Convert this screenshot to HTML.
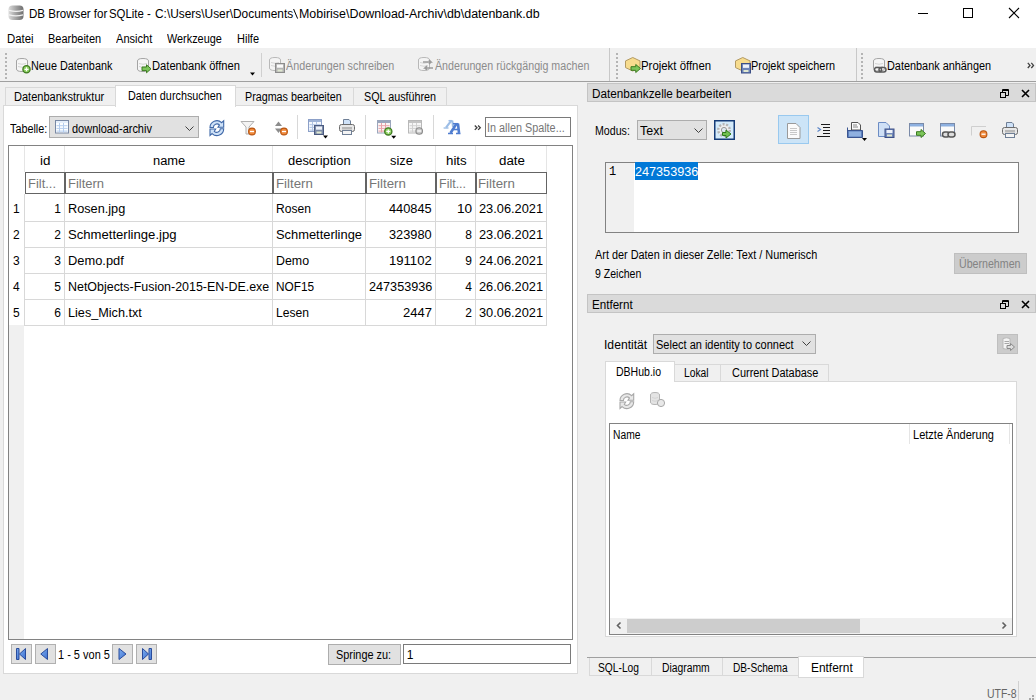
<!DOCTYPE html>
<html><head><meta charset="utf-8"><style>
html,body{margin:0;padding:0;}
body{width:1036px;height:700px;position:relative;overflow:hidden;background:#f0f0f0;font-family:"Liberation Sans", sans-serif;}
body>div{position:absolute;}
.t{white-space:pre;}
svg{position:absolute;overflow:visible;}
</style></head><body>
<div style="left:0px;top:0px;width:1036px;height:48px;background:#ffffff;"></div>
<div class="t" style="left:28.90px;top:8px;font-size:12px;line-height:12px;color:#000;transform:scaleX(0.9631);transform-origin:0 0;">DB Browser for</div>
<div class="t" style="left:109.40px;top:8px;font-size:12px;line-height:12px;color:#000;transform:scaleX(0.9483);transform-origin:0 0;">SQLite -</div>
<div class="t" style="left:155.40px;top:8px;font-size:12px;line-height:12px;color:#000;transform:scaleX(0.9915);transform-origin:0 0;">C:\Users\User\Documents</div>
<svg style="left:292px;top:8px" width="8" height="12" viewBox="0 0 8 12"><path d="M1.6 1 L5.6 10.6" stroke="#000" stroke-width="1"/></svg>
<div class="t" style="left:298.60px;top:8px;font-size:12px;line-height:12px;color:#000;transform:scaleX(1.0366);transform-origin:0 0;">Mobirise\Download-Archiv\db\datenbank.db</div>
<div class="t" style="left:6.80px;top:33px;font-size:12px;line-height:12px;color:#000;transform:scaleX(0.9472);transform-origin:0 0;">Datei</div>
<div class="t" style="left:47.70px;top:33px;font-size:12px;line-height:12px;color:#000;transform:scaleX(0.9147);transform-origin:0 0;">Bearbeiten</div>
<div class="t" style="left:115.90px;top:33px;font-size:12px;line-height:12px;color:#000;transform:scaleX(0.9224);transform-origin:0 0;">Ansicht</div>
<div class="t" style="left:167.00px;top:33px;font-size:12px;line-height:12px;color:#000;transform:scaleX(0.9058);transform-origin:0 0;">Werkzeuge</div>
<div class="t" style="left:236.90px;top:33px;font-size:12px;line-height:12px;color:#000;transform:scaleX(0.9160);transform-origin:0 0;">Hilfe</div>
<div style="left:0px;top:48px;width:1036px;height:33px;background:#f0f0f0;"></div>
<div style="left:0px;top:81px;width:1036px;height:1px;background:#a0a0a0;"></div>
<div class="t" style="left:30.80px;top:60px;font-size:12px;line-height:12px;color:#000;transform:scaleX(0.9035);transform-origin:0 0;">Neue Datenbank</div>
<div class="t" style="left:151.90px;top:60px;font-size:12px;line-height:12px;color:#000;transform:scaleX(0.9311);transform-origin:0 0;">Datenbank öffnen</div>
<div class="t" style="left:286.20px;top:60px;font-size:12px;line-height:12px;color:#8c8c8c;transform:scaleX(0.8966);transform-origin:0 0;">Änderungen schreiben</div>
<div class="t" style="left:435.10px;top:60px;font-size:12px;line-height:12px;color:#8c8c8c;transform:scaleX(0.8899);transform-origin:0 0;">Änderungen rückgängig machen</div>
<div style="left:261px;top:53px;width:1px;height:24px;background:#d0d0d0;"></div>
<div style="left:609px;top:48px;width:1px;height:33px;background:#c8c8c8;"></div>
<div class="t" style="left:641.40px;top:60px;font-size:12px;line-height:12px;color:#000;transform:scaleX(0.9500);transform-origin:0 0;">Projekt öffnen</div>
<div class="t" style="left:751.40px;top:60px;font-size:12px;line-height:12px;color:#000;transform:scaleX(0.9069);transform-origin:0 0;">Projekt speichern</div>
<div style="left:856px;top:48px;width:1px;height:33px;background:#c8c8c8;"></div>
<div class="t" style="left:887.40px;top:60px;font-size:12px;line-height:12px;color:#000;transform:scaleX(0.9068);transform-origin:0 0;">Datenbank anhängen</div>
<div style="left:3px;top:105px;width:575px;height:569px;background:#ffffff;box-sizing:border-box;border:1px solid #d9d9d9;"></div>
<div style="left:5px;top:87px;width:111px;height:19px;background:#f0f0f0;box-sizing:border-box;border:1px solid #d9d9d9;"></div>
<div style="left:235px;top:87px;width:119px;height:19px;background:#f0f0f0;box-sizing:border-box;border:1px solid #d9d9d9;"></div>
<div style="left:353px;top:87px;width:94px;height:19px;background:#f0f0f0;box-sizing:border-box;border:1px solid #d9d9d9;"></div>
<div style="left:115px;top:85px;width:121px;height:22px;background:#ffffff;box-sizing:border-box;border:1px solid #d9d9d9;border-bottom:none;"></div>
<div class="t" style="left:14.10px;top:91px;font-size:12px;line-height:12px;color:#000;transform:scaleX(0.9199);transform-origin:0 0;">Datenbankstruktur</div>
<div class="t" style="left:127.70px;top:90px;font-size:12px;line-height:12px;color:#000;transform:scaleX(0.9011);transform-origin:0 0;">Daten durchsuchen</div>
<div class="t" style="left:244.60px;top:91px;font-size:12px;line-height:12px;color:#000;transform:scaleX(0.8945);transform-origin:0 0;">Pragmas bearbeiten</div>
<div class="t" style="left:364.40px;top:91px;font-size:12px;line-height:12px;color:#000;transform:scaleX(0.8978);transform-origin:0 0;">SQL ausführen</div>
<div class="t" style="left:9.50px;top:123px;font-size:12px;line-height:12px;color:#000;transform:scaleX(0.9011);transform-origin:0 0;">Tabelle:</div>
<div style="left:49px;top:116px;width:150px;height:22px;background:#e1e1e1;box-sizing:border-box;border:1px solid #adadad;"></div>
<div class="t" style="left:71.80px;top:123px;font-size:12px;line-height:12px;color:#000;transform:scaleX(0.9143);transform-origin:0 0;">download-archiv</div>
<div style="left:485px;top:117px;width:86px;height:20px;background:#ffffff;box-sizing:border-box;border:1px solid #7a7a7a;"></div>
<div class="t" style="left:487.10px;top:122px;font-size:12px;line-height:12px;color:#767676;transform:scaleX(0.9026);transform-origin:0 0;">In allen Spalte...</div>
<div style="left:297px;top:115px;width:1px;height:24px;background:#d8d8d8;"></div>
<div style="left:365px;top:115px;width:1px;height:24px;background:#d8d8d8;"></div>
<div style="left:433px;top:115px;width:1px;height:24px;background:#d8d8d8;"></div>
<div style="left:8px;top:145px;width:565px;height:495px;background:#ffffff;box-sizing:border-box;border:1px solid #828282;"></div>
<div style="left:9px;top:325px;width:15px;height:314px;background:#f0f0f0;"></div>
<div style="left:24px;top:146px;width:1px;height:26px;background:#e5e5e5;"></div>
<div style="left:24px;top:194px;width:1px;height:131px;background:#d8d8d8;"></div>
<div style="left:64px;top:146px;width:1px;height:26px;background:#e5e5e5;"></div>
<div style="left:64px;top:194px;width:1px;height:131px;background:#d8d8d8;"></div>
<div style="left:272px;top:146px;width:1px;height:26px;background:#e5e5e5;"></div>
<div style="left:272px;top:194px;width:1px;height:131px;background:#d8d8d8;"></div>
<div style="left:365px;top:146px;width:1px;height:26px;background:#e5e5e5;"></div>
<div style="left:365px;top:194px;width:1px;height:131px;background:#d8d8d8;"></div>
<div style="left:435px;top:146px;width:1px;height:26px;background:#e5e5e5;"></div>
<div style="left:435px;top:194px;width:1px;height:131px;background:#d8d8d8;"></div>
<div style="left:475px;top:146px;width:1px;height:26px;background:#e5e5e5;"></div>
<div style="left:475px;top:194px;width:1px;height:131px;background:#d8d8d8;"></div>
<div style="left:546px;top:146px;width:1px;height:26px;background:#e5e5e5;"></div>
<div style="left:546px;top:194px;width:1px;height:131px;background:#d8d8d8;"></div>
<div style="left:24px;top:221px;width:523px;height:1px;background:#d8d8d8;"></div>
<div style="left:24px;top:247px;width:523px;height:1px;background:#d8d8d8;"></div>
<div style="left:24px;top:273px;width:523px;height:1px;background:#d8d8d8;"></div>
<div style="left:24px;top:299px;width:523px;height:1px;background:#d8d8d8;"></div>
<div style="left:24px;top:325px;width:523px;height:1px;background:#d8d8d8;"></div>
<div style="left:25px;top:172px;width:40px;height:22px;background:#ffffff;box-sizing:border-box;border:1px solid #646464;"></div>
<div style="left:65px;top:172px;width:208px;height:22px;background:#ffffff;box-sizing:border-box;border:1px solid #646464;"></div>
<div style="left:273px;top:172px;width:93px;height:22px;background:#ffffff;box-sizing:border-box;border:1px solid #646464;"></div>
<div style="left:366px;top:172px;width:70px;height:22px;background:#ffffff;box-sizing:border-box;border:1px solid #646464;"></div>
<div style="left:436px;top:172px;width:40px;height:22px;background:#ffffff;box-sizing:border-box;border:1px solid #646464;"></div>
<div style="left:476px;top:172px;width:71px;height:22px;background:#ffffff;box-sizing:border-box;border:1px solid #646464;"></div>
<div class="t" style="left:40.00px;top:155px;font-size:12px;line-height:12px;color:#000;transform:scaleX(1.1174);transform-origin:0 0;">id</div>
<div class="t" style="left:152.90px;top:155px;font-size:12px;line-height:12px;color:#000;transform:scaleX(1.0752);transform-origin:0 0;">name</div>
<div class="t" style="left:287.80px;top:155px;font-size:12px;line-height:12px;color:#000;transform:scaleX(1.0786);transform-origin:0 0;">description</div>
<div class="t" style="left:389.50px;top:155px;font-size:12px;line-height:12px;color:#000;transform:scaleX(1.0723);transform-origin:0 0;">size</div>
<div class="t" style="left:446.10px;top:155px;font-size:12px;line-height:12px;color:#000;transform:scaleX(1.1094);transform-origin:0 0;">hits</div>
<div class="t" style="left:498.70px;top:155px;font-size:12px;line-height:12px;color:#000;transform:scaleX(1.1101);transform-origin:0 0;">date</div>
<div class="t" style="left:28.00px;top:178px;font-size:12px;line-height:12px;color:#767676;transform:scaleX(1.0766);transform-origin:0 0;">Filt...</div>
<div class="t" style="left:67.80px;top:178px;font-size:12px;line-height:12px;color:#767676;transform:scaleX(1.0826);transform-origin:0 0;">Filtern</div>
<div class="t" style="left:275.80px;top:178px;font-size:12px;line-height:12px;color:#767676;transform:scaleX(1.1075);transform-origin:0 0;">Filtern</div>
<div class="t" style="left:368.60px;top:178px;font-size:12px;line-height:12px;color:#767676;transform:scaleX(1.1075);transform-origin:0 0;">Filtern</div>
<div class="t" style="left:438.60px;top:178px;font-size:12px;line-height:12px;color:#767676;transform:scaleX(1.0403);transform-origin:0 0;">Filt...</div>
<div class="t" style="left:478.40px;top:178px;font-size:12px;line-height:12px;color:#767676;transform:scaleX(1.1075);transform-origin:0 0;">Filtern</div>
<div class="t" style="left:12.90px;top:203px;font-size:12px;line-height:12px;color:#000;">1</div>
<div class="t" style="right:975px;top:203px;font-size:12px;line-height:12px">1</div>
<div class="t" style="left:67.80px;top:203px;font-size:12px;line-height:12px;color:#000;transform:scaleX(1.0597);transform-origin:0 0;">Rosen.jpg</div>
<div class="t" style="left:276.00px;top:203px;font-size:12px;line-height:12px;color:#000;transform:scaleX(1.0063);transform-origin:0 0;">Rosen</div>
<div class="t" style="left:389.40px;top:203px;font-size:12px;line-height:12px;color:#000;transform:scaleX(1.0657);transform-origin:0 0;">440845</div>
<div class="t" style="left:456.80px;top:203px;font-size:12px;line-height:12px;color:#000;transform:scaleX(1.1349);transform-origin:0 0;">10</div>
<div class="t" style="left:478.60px;top:203px;font-size:12px;line-height:12px;color:#000;transform:scaleX(1.0669);transform-origin:0 0;">23.06.2021</div>
<div class="t" style="left:12.90px;top:229px;font-size:12px;line-height:12px;color:#000;">2</div>
<div class="t" style="right:975px;top:229px;font-size:12px;line-height:12px">2</div>
<div class="t" style="left:67.80px;top:229px;font-size:12px;line-height:12px;color:#000;transform:scaleX(1.0918);transform-origin:0 0;">Schmetterlinge.jpg</div>
<div class="t" style="left:276.00px;top:229px;font-size:12px;line-height:12px;color:#000;transform:scaleX(1.0742);transform-origin:0 0;">Schmetterlinge</div>
<div class="t" style="left:389.40px;top:229px;font-size:12px;line-height:12px;color:#000;transform:scaleX(1.0657);transform-origin:0 0;">323980</div>
<div class="t" style="right:564px;top:229px;font-size:12px;line-height:12px">8</div>
<div class="t" style="left:478.60px;top:229px;font-size:12px;line-height:12px;color:#000;transform:scaleX(1.0669);transform-origin:0 0;">23.06.2021</div>
<div class="t" style="left:12.90px;top:255px;font-size:12px;line-height:12px;color:#000;">3</div>
<div class="t" style="right:975px;top:255px;font-size:12px;line-height:12px">3</div>
<div class="t" style="left:67.80px;top:255px;font-size:12px;line-height:12px;color:#000;transform:scaleX(1.0722);transform-origin:0 0;">Demo.pdf</div>
<div class="t" style="left:276.00px;top:255px;font-size:12px;line-height:12px;color:#000;transform:scaleX(1.0319);transform-origin:0 0;">Demo</div>
<div class="t" style="left:389.40px;top:255px;font-size:12px;line-height:12px;color:#000;transform:scaleX(1.0907);transform-origin:0 0;">191102</div>
<div class="t" style="right:564px;top:255px;font-size:12px;line-height:12px">9</div>
<div class="t" style="left:478.60px;top:255px;font-size:12px;line-height:12px;color:#000;transform:scaleX(1.0669);transform-origin:0 0;">24.06.2021</div>
<div class="t" style="left:12.90px;top:281px;font-size:12px;line-height:12px;color:#000;">4</div>
<div class="t" style="right:975px;top:281px;font-size:12px;line-height:12px">5</div>
<div class="t" style="left:67.80px;top:281px;font-size:12px;line-height:12px;color:#000;transform:scaleX(1.0369);transform-origin:0 0;">NetObjects-Fusion-2015-EN-DE.exe</div>
<div class="t" style="left:276.00px;top:281px;font-size:12px;line-height:12px;color:#000;transform:scaleX(0.9843);transform-origin:0 0;">NOF15</div>
<div class="t" style="left:368.70px;top:281px;font-size:12px;line-height:12px;color:#000;transform:scaleX(1.0547);transform-origin:0 0;">247353936</div>
<div class="t" style="right:564px;top:281px;font-size:12px;line-height:12px">4</div>
<div class="t" style="left:478.60px;top:281px;font-size:12px;line-height:12px;color:#000;transform:scaleX(1.0669);transform-origin:0 0;">26.06.2021</div>
<div class="t" style="left:12.90px;top:307px;font-size:12px;line-height:12px;color:#000;">5</div>
<div class="t" style="right:975px;top:307px;font-size:12px;line-height:12px">6</div>
<div class="t" style="left:67.80px;top:307px;font-size:12px;line-height:12px;color:#000;transform:scaleX(1.0548);transform-origin:0 0;">Lies_Mich.txt</div>
<div class="t" style="left:276.00px;top:307px;font-size:12px;line-height:12px;color:#000;transform:scaleX(1.0094);transform-origin:0 0;">Lesen</div>
<div class="t" style="left:403.20px;top:307px;font-size:12px;line-height:12px;color:#000;transform:scaleX(1.0822);transform-origin:0 0;">2447</div>
<div class="t" style="right:564px;top:307px;font-size:12px;line-height:12px">2</div>
<div class="t" style="left:478.60px;top:307px;font-size:12px;line-height:12px;color:#000;transform:scaleX(1.0669);transform-origin:0 0;">30.06.2021</div>
<div style="left:11px;top:644px;width:21px;height:20px;background:#e1e1e1;box-sizing:border-box;border:1px solid #b0b0b0;"></div>
<div style="left:35px;top:644px;width:21px;height:20px;background:#e1e1e1;box-sizing:border-box;border:1px solid #b0b0b0;"></div>
<div style="left:112px;top:644px;width:21px;height:20px;background:#e1e1e1;box-sizing:border-box;border:1px solid #b0b0b0;"></div>
<div style="left:136px;top:644px;width:21px;height:20px;background:#e1e1e1;box-sizing:border-box;border:1px solid #b0b0b0;"></div>
<div class="t" style="left:58.10px;top:649px;font-size:12px;line-height:12px;color:#000;transform:scaleX(0.9153);transform-origin:0 0;">1 - 5 von 5</div>
<div style="left:328px;top:644px;width:73px;height:21px;background:#e1e1e1;box-sizing:border-box;border:1px solid #adadad;"></div>
<div class="t" style="left:335.80px;top:649px;font-size:12px;line-height:12px;color:#000;transform:scaleX(0.9075);transform-origin:0 0;">Springe zu:</div>
<div style="left:403px;top:644px;width:168px;height:20px;background:#ffffff;box-sizing:border-box;border:1px solid #7a7a7a;"></div>
<div class="t" style="left:406.70px;top:649px;font-size:12px;line-height:12px;color:#000;">1</div>
<div style="left:587px;top:83px;width:449px;height:19px;background:#dadada;box-sizing:border-box;border:1px solid #c4c4c4;"></div>
<div class="t" style="left:591.80px;top:88px;font-size:12px;line-height:12px;color:#000;transform:scaleX(0.9775);transform-origin:0 0;">Datenbankzelle bearbeiten</div>
<div class="t" style="left:595.10px;top:125px;font-size:12px;line-height:12px;color:#000;transform:scaleX(0.8858);transform-origin:0 0;">Modus:</div>
<div style="left:637px;top:120px;width:70px;height:20px;background:#e1e1e1;box-sizing:border-box;border:1px solid #adadad;"></div>
<div class="t" style="left:640.10px;top:125px;font-size:12px;line-height:12px;color:#000;transform:scaleX(1.0377);transform-origin:0 0;">Text</div>
<div style="left:714px;top:120px;width:21px;height:20px;background:#d4ebfb;box-sizing:border-box;border:1px solid #153c78;box-shadow:inset 0 0 0 0.5px #153c78;"></div>
<div style="left:778px;top:115px;width:31px;height:29px;background:#cce4f7;box-sizing:border-box;border:1px solid #99c9ef;"></div>
<div style="left:605px;top:162px;width:414px;height:71px;background:#ffffff;box-sizing:border-box;border:1px solid #828282;"></div>
<div style="left:606px;top:163px;width:28px;height:69px;background:#f0f0f0;"></div>
<div class="t" style="left:609.00px;top:166px;font-size:12px;line-height:12px;color:#000;font-family:'Liberation Mono', monospace;">1</div>
<div style="left:635px;top:162px;width:63px;height:18px;background:#0078d7;"></div>
<div class="t" style="left:634.90px;top:166px;font-size:12px;line-height:12px;color:#ffffff;transform:scaleX(1.0530);transform-origin:0 0;">247353936</div>
<div class="t" style="left:595.20px;top:249px;font-size:12px;line-height:12px;color:#000;transform:scaleX(0.9065);transform-origin:0 0;">Art der Daten in dieser Zelle: Text / Numerisch</div>
<div class="t" style="left:595.20px;top:268px;font-size:12px;line-height:12px;color:#000;transform:scaleX(0.8776);transform-origin:0 0;">9 Zeichen</div>
<div style="left:954px;top:253px;width:73px;height:21px;background:#cccccc;box-sizing:border-box;border:1px solid #bfbfbf;"></div>
<div class="t" style="left:959.10px;top:258px;font-size:12px;line-height:12px;color:#838383;transform:scaleX(0.8860);transform-origin:0 0;">Übernehmen</div>
<div style="left:587px;top:294px;width:449px;height:19px;background:#dadada;box-sizing:border-box;border:1px solid #c4c4c4;"></div>
<div class="t" style="left:591.90px;top:299px;font-size:12px;line-height:12px;color:#000;transform:scaleX(0.9674);transform-origin:0 0;">Entfernt</div>
<div class="t" style="left:603.90px;top:339px;font-size:12px;line-height:12px;color:#000;transform:scaleX(1.0120);transform-origin:0 0;">Identität</div>
<div style="left:653px;top:334px;width:163px;height:20px;background:#e1e1e1;box-sizing:border-box;border:1px solid #adadad;"></div>
<div class="t" style="left:655.90px;top:339px;font-size:12px;line-height:12px;color:#000;transform:scaleX(0.9168);transform-origin:0 0;">Select an identity to connect</div>
<div style="left:997px;top:334px;width:21px;height:20px;background:#cccccc;box-sizing:border-box;border:1px solid #bfbfbf;"></div>
<div style="left:605px;top:381px;width:412px;height:256px;background:#ffffff;box-sizing:border-box;border:1px solid #d9d9d9;"></div>
<div style="left:674px;top:364px;width:47px;height:18px;background:#f0f0f0;box-sizing:border-box;border:1px solid #d9d9d9;"></div>
<div style="left:720px;top:364px;width:109px;height:18px;background:#f0f0f0;box-sizing:border-box;border:1px solid #d9d9d9;"></div>
<div style="left:605px;top:361px;width:70px;height:21px;background:#ffffff;box-sizing:border-box;border:1px solid #d9d9d9;border-bottom:none;"></div>
<div class="t" style="left:615.70px;top:366px;font-size:12px;line-height:12px;color:#000;transform:scaleX(0.8772);transform-origin:0 0;">DBHub.io</div>
<div class="t" style="left:683.80px;top:367px;font-size:12px;line-height:12px;color:#000;transform:scaleX(0.8586);transform-origin:0 0;">Lokal</div>
<div class="t" style="left:731.90px;top:367px;font-size:12px;line-height:12px;color:#000;transform:scaleX(0.9121);transform-origin:0 0;">Current Database</div>
<div style="left:609px;top:423px;width:404px;height:212px;background:#ffffff;box-sizing:border-box;border:1px solid #828282;"></div>
<div class="t" style="left:613.00px;top:429px;font-size:12px;line-height:12px;color:#000;transform:scaleX(0.8567);transform-origin:0 0;">Name</div>
<div style="left:909px;top:424px;width:1px;height:20px;background:#e5e5e5;"></div>
<div style="left:1009px;top:424px;width:1px;height:20px;background:#e5e5e5;"></div>
<div class="t" style="left:912.80px;top:429px;font-size:12px;line-height:12px;color:#000;transform:scaleX(0.9185);transform-origin:0 0;">Letzte Änderung</div>
<div style="left:610px;top:618px;width:402px;height:16px;background:#f0f0f0;"></div>
<div style="left:627px;top:619px;width:233px;height:14px;background:#cdcdcd;"></div>
<div style="left:589px;top:657px;width:63px;height:19px;background:#f0f0f0;box-sizing:border-box;border:1px solid #d9d9d9;"></div>
<div style="left:651px;top:657px;width:72px;height:19px;background:#f0f0f0;box-sizing:border-box;border:1px solid #d9d9d9;"></div>
<div style="left:722px;top:657px;width:77px;height:19px;background:#f0f0f0;box-sizing:border-box;border:1px solid #d9d9d9;"></div>
<div style="left:587px;top:657px;width:449px;height:1px;background:#a0a0a0;"></div>
<div style="left:798px;top:656px;width:66px;height:22px;background:#ffffff;box-sizing:border-box;border:1px solid #d9d9d9;"></div>
<div class="t" style="left:597.70px;top:662px;font-size:12px;line-height:12px;color:#000;transform:scaleX(0.8541);transform-origin:0 0;">SQL-Log</div>
<div class="t" style="left:662.00px;top:662px;font-size:12px;line-height:12px;color:#000;transform:scaleX(0.8625);transform-origin:0 0;">Diagramm</div>
<div class="t" style="left:732.80px;top:662px;font-size:12px;line-height:12px;color:#000;transform:scaleX(0.8427);transform-origin:0 0;">DB-Schema</div>
<div class="t" style="left:810.60px;top:662px;font-size:12px;line-height:12px;color:#000;transform:scaleX(0.9919);transform-origin:0 0;">Entfernt</div>
<div style="left:1018px;top:681px;width:1px;height:19px;background:#d0d0d0;"></div>
<div class="t" style="left:987.10px;top:687.5px;font-size:12px;line-height:12px;color:#666666;transform:scaleX(0.8720);transform-origin:0 0;">UTF-8</div>
<div style="left:1032px;top:695px;width:2px;height:2px;background:#a8a8a8;"></div>
<div style="left:1029px;top:698px;width:2px;height:2px;background:#a8a8a8;"></div>
<div style="left:1032px;top:698px;width:2px;height:2px;background:#a8a8a8;"></div>
<svg style="left:8px;top:5px" width="16" height="16" viewBox="0 0 16 16"><defs><linearGradient id="gdb" x1="0" x2="1"><stop offset="0" stop-color="#dcdcdc"/><stop offset=".45" stop-color="#a8a8a8"/><stop offset="1" stop-color="#6e6e6e"/></linearGradient></defs><rect x="0.5" y="0.5" width="15" height="14.5" rx="4" fill="url(#gdb)"/><path d="M1 5.3 Q8 7.3 15 5.3 M1 9.8 Q8 11.8 15 9.8" stroke="#f2f2f2" stroke-width="1.2" fill="none"/></svg>
<svg style="left:16px;top:58px" width="16" height="16" viewBox="0 0 16 16"><path d="M0.5 3 Q0.5 0.5 6.0 0.5 Q11.5 0.5 11.5 3 V11 Q11.5 13.5 6.0 13.5 Q0.5 13.5 0.5 11Z" fill="#f6f6f6" stroke="#a4a4a4"/><path d="M2 5.5 Q6.0 7 10 5.5 M2 8.5 Q6.0 10 10 8.5" fill="none" stroke="#d4d4d4"/><circle cx="10.5" cy="11.3" r="3.6" fill="#8ccf5f" stroke="#3f7a22" stroke-width="1.3"/><path d="M8.5 11.3H12.5M10.5 9.3V13.3" stroke="#fff" stroke-width="1.2"/></svg>
<svg style="left:137px;top:58px" width="16" height="16" viewBox="0 0 16 16"><path d="M0.5 3 Q0.5 0.5 6.0 0.5 Q11.5 0.5 11.5 3 V11 Q11.5 13.5 6.0 13.5 Q0.5 13.5 0.5 11Z" fill="#f6f6f6" stroke="#a4a4a4"/><path d="M2 5.5 Q6.0 7 10 5.5 M2 8.5 Q6.0 10 10 8.5" fill="none" stroke="#d4d4d4"/><path d="M5.0 9.0 H9.5 V6.8 L14.0 10.8 L9.5 14.8 V12.600000000000001 H5.0Z" fill="#7cc55a" stroke="#3b7a1f" stroke-width="1"/></svg>
<svg style="left:269px;top:57px" width="16" height="16" viewBox="0 0 16 16"><path d="M0.5 3 Q0.5 0.5 6.0 0.5 Q11.5 0.5 11.5 3 V11 Q11.5 13.5 6.0 13.5 Q0.5 13.5 0.5 11Z" fill="#f4f4f4" stroke="#b8b8b8"/><path d="M2 5.5 Q6.0 7 10 5.5 M2 8.5 Q6.0 10 10 8.5" fill="none" stroke="#d4d4d4"/><rect x="6.5" y="6.5" width="9" height="9" fill="#b4b4b4" stroke="#8c8c8c"/><rect x="8" y="7.5" width="6" height="3.2" fill="#fafafa"/><rect x="8.5" y="12.5" width="5" height="2" fill="#e0e8d0"/></svg>
<svg style="left:418px;top:57px" width="18" height="18" viewBox="0 0 18 18"><path d="M0.5 3 Q0.5 0.5 6.0 0.5 Q11.5 0.5 11.5 3 V11 Q11.5 13.5 6.0 13.5 Q0.5 13.5 0.5 11Z" fill="#f4f4f4" stroke="#b8b8b8"/><path d="M2 5.5 Q6.0 7 10 5.5 M2 8.5 Q6.0 10 10 8.5" fill="none" stroke="#d4d4d4"/><path d="M5 5 H13 L11 3 M13 5 L11 7 M15 11 H7 L9 9 M7 11 L9 13" stroke="#9a9a9a" stroke-width="1.6" fill="none"/></svg>
<svg style="left:625px;top:57px" width="17" height="17" viewBox="0 0 17 17"><path d="M7.75 0.5 L15.0 3.915 V10.584999999999999 L7.75 14.0 L0.5 10.584999999999999 V3.915Z" fill="#f7dc8e" stroke="#b39a62"/><path d="M6.0 9.7 H10.75 V7.5 L15.5 11.5 L10.75 15.5 V13.3 H6.0Z" fill="#7cc55a" stroke="#3b7a1f" stroke-width="1"/></svg>
<svg style="left:735px;top:57px" width="17" height="17" viewBox="0 0 17 17"><path d="M7.75 0.5 L15.0 3.915 V10.584999999999999 L7.75 14.0 L0.5 10.584999999999999 V3.915Z" fill="#f7dc8e" stroke="#b39a62"/><rect x="6.5" y="6.5" width="9" height="9.5" fill="#6d84b8" stroke="#3c4f86"/><rect x="8" y="7.5" width="6" height="3.36" fill="#eef2fa"/><rect x="8.5" y="13.0" width="5" height="2" fill="#e0e8d0"/></svg>
<svg style="left:873px;top:58px" width="16" height="16" viewBox="0 0 16 16"><path d="M0.5 3 Q0.5 0.5 6.0 0.5 Q11.5 0.5 11.5 3 V10.5 Q11.5 13.0 6.0 13.0 Q0.5 13.0 0.5 10.5Z" fill="#f6f6f6" stroke="#a4a4a4"/><path d="M2 5.5 Q6.0 7 10 5.5 M2 8.5 Q6.0 10 10 8.5" fill="none" stroke="#d4d4d4"/><rect x="1.5" y="9.5" width="7" height="4.5" rx="2.2" fill="none" stroke="#5a5a5a" stroke-width="1.5"/><rect x="6" y="9.5" width="7" height="4.5" rx="2.2" fill="none" stroke="#5a5a5a" stroke-width="1.5"/></svg>
<svg style="left:1027px;top:62px" width="8" height="7" viewBox="0 0 8 7"><path d="M.8 .8 L3 3.4 L.8 6 M4.3 .8 L6.5 3.4 L4.3 6" stroke="#404040" stroke-width="1.3" fill="none"/></svg>
<svg style="left:250px;top:72px" width="6" height="4" viewBox="0 0 6 4"><path d="M0 0.5H5L2.5 3.5Z" fill="#000"/></svg>
<div style="left:5px;top:53px;width:2px;height:2px;background:#b4b4b4;"></div>
<div style="left:5px;top:57px;width:2px;height:2px;background:#b4b4b4;"></div>
<div style="left:5px;top:61px;width:2px;height:2px;background:#b4b4b4;"></div>
<div style="left:5px;top:65px;width:2px;height:2px;background:#b4b4b4;"></div>
<div style="left:5px;top:69px;width:2px;height:2px;background:#b4b4b4;"></div>
<div style="left:5px;top:73px;width:2px;height:2px;background:#b4b4b4;"></div>
<div style="left:5px;top:77px;width:2px;height:2px;background:#b4b4b4;"></div>
<div style="left:616px;top:53px;width:2px;height:2px;background:#b4b4b4;"></div>
<div style="left:616px;top:57px;width:2px;height:2px;background:#b4b4b4;"></div>
<div style="left:616px;top:61px;width:2px;height:2px;background:#b4b4b4;"></div>
<div style="left:616px;top:65px;width:2px;height:2px;background:#b4b4b4;"></div>
<div style="left:616px;top:69px;width:2px;height:2px;background:#b4b4b4;"></div>
<div style="left:616px;top:73px;width:2px;height:2px;background:#b4b4b4;"></div>
<div style="left:616px;top:77px;width:2px;height:2px;background:#b4b4b4;"></div>
<div style="left:861px;top:53px;width:2px;height:2px;background:#b4b4b4;"></div>
<div style="left:861px;top:57px;width:2px;height:2px;background:#b4b4b4;"></div>
<div style="left:861px;top:61px;width:2px;height:2px;background:#b4b4b4;"></div>
<div style="left:861px;top:65px;width:2px;height:2px;background:#b4b4b4;"></div>
<div style="left:861px;top:69px;width:2px;height:2px;background:#b4b4b4;"></div>
<div style="left:861px;top:73px;width:2px;height:2px;background:#b4b4b4;"></div>
<div style="left:861px;top:77px;width:2px;height:2px;background:#b4b4b4;"></div>
<div style="left:918px;top:13px;width:10px;height:1px;background:#000;"></div>
<div style="left:963px;top:8px;width:10px;height:10px;box-sizing:border-box;border:1px solid #000;"></div>
<svg style="left:1008px;top:7px" width="12" height="12" viewBox="0 0 12 12"><path d="M1 1 L11 11 M11 1 L1 11" stroke="#000" stroke-width="1.1"/></svg>
<svg style="left:55px;top:120px" width="14" height="14" viewBox="0 0 14 14"><rect x="0.5" y="0.5" width="13" height="12.5" fill="#fbfdff" stroke="#7888a4"/><rect x="1" y="1" width="12" height="2" fill="#e4eefa"/><path d="M1.5 5.7H12.5" stroke="#b4cdee" stroke-width="1"/><path d="M1.5 8.4H12.5" stroke="#b4cdee" stroke-width="1"/><path d="M1.5 11.100000000000001H12.5" stroke="#b4cdee" stroke-width="1"/><path d="M4.5 3V12.5M8.5 3V12.5" stroke="#b4cdee"/></svg>
<svg style="left:185px;top:126px" width="9" height="5" viewBox="0 0 9 5"><path d="M0.5 0.5 L4.5 4.5 L8.5 0.5" stroke="#404040" fill="none"/></svg>
<svg style="left:209px;top:119px" width="16" height="16" viewBox="0 0 16 16"><path d="M1 8.5 A6.8 6.8 0 0 1 12.6 3.7 L14.7 1.8 V8.3 H9 L10.4 6 A3.5 3.5 0 0 0 4.4 8.5Z" fill="#cfe2f8" stroke="#3f68a8" stroke-width="1.1" stroke-linejoin="miter"/><path d="M1 8.5 A6.8 6.8 0 0 1 12.6 3.7 L14.7 1.8 V8.3 H9 L10.4 6 A3.5 3.5 0 0 0 4.4 8.5Z" transform="rotate(180 7.85 9.15)" fill="#cfe2f8" stroke="#3f68a8" stroke-width="1.1"/></svg>
<svg style="left:240px;top:120px" width="17" height="16" viewBox="0 0 17 16"><path d="M1 1.5 H14 L9 7 V14 H6 V7Z" fill="#f4f4f4" stroke="#b0b0b0"/><circle cx="12" cy="11.5" r="3.4" fill="#f08a3c" stroke="#b85410" stroke-width="1.1"/><path d="M10 11.5H14" stroke="#fff" stroke-width="1.3"/></svg>
<svg style="left:274px;top:120px" width="15" height="16" viewBox="0 0 15 16"><path d="M1 6 L4.5 1.5 L8 6Z" fill="#8c8c8c"/><path d="M1 8.5 H8 L4.5 13Z" fill="#8c8c8c"/><circle cx="10" cy="11.5" r="3.4" fill="#f08a3c" stroke="#b85410" stroke-width="1.1"/><path d="M8 11.5H12" stroke="#fff" stroke-width="1.3"/></svg>
<svg style="left:308px;top:119px" width="21" height="20" viewBox="0 0 21 20"><rect x="0.5" y="0.5" width="13" height="12" fill="#f4f8fe" stroke="#8ca0c8"/><rect x="1" y="1" width="12" height="2" fill="#9fb4d8"/><path d="M1.5 5.7H12.5" stroke="#b0c4e4" stroke-width="1"/><path d="M1.5 8.4H12.5" stroke="#b0c4e4" stroke-width="1"/><path d="M1.5 11.100000000000001H12.5" stroke="#b0c4e4" stroke-width="1"/><path d="M4.5 3V12M8.5 3V12" stroke="#b0c4e4"/><rect x="6.5" y="6.5" width="9" height="9" fill="#7d8ca8" stroke="#4a5a80"/><rect x="8" y="7.5" width="6" height="3.2" fill="#eef2fa"/><rect x="8.5" y="12.5" width="5" height="2" fill="#e0e8d0"/><path d="M15 16.5H20L17.5 19.5Z" fill="#000"/></svg>
<svg style="left:339px;top:119px" width="17" height="17" viewBox="0 0 17 17"><path d="M4.5 0.5H10 L11.5 2 V6 H4.5Z" fill="#cfe2f8" stroke="#6f7f96"/><rect x="0.5" y="5.5" width="15" height="7" rx="2" fill="#e8e8e8" stroke="#6c6c6c"/><rect x="3" y="8" width="10" height="2.5" fill="#b8b8b8"/><rect x="3.5" y="11.5" width="9" height="4" fill="#f4f4f4" stroke="#6f7f96"/></svg>
<svg style="left:377px;top:120px" width="20" height="19" viewBox="0 0 20 19"><rect x="0.5" y="0.5" width="13" height="12.5" fill="#fbf4f4" stroke="#9aa6bc"/><rect x="1" y="1" width="12" height="2" fill="#9aa6bc"/><path d="M1.5 5.7H12.5" stroke="#e8a0a8" stroke-width="1"/><path d="M1.5 8.4H12.5" stroke="#e8a0a8" stroke-width="1"/><path d="M1.5 11.100000000000001H12.5" stroke="#e8a0a8" stroke-width="1"/><path d="M4.5 3V12.5M8.5 3V12.5" stroke="#e8a0a8"/><circle cx="11.3" cy="11.4" r="3.6" fill="#8ccf5f" stroke="#3f7a22" stroke-width="1.3"/><path d="M9.3 11.4H13.3M11.3 9.4V13.4" stroke="#fff" stroke-width="1.2"/><path d="M14.2 15.7H19.2L16.7 18.7Z" fill="#000"/></svg>
<svg style="left:408px;top:120px" width="16" height="16" viewBox="0 0 16 16"><rect x="0.5" y="0.5" width="13" height="12.5" fill="#f6f6f6" stroke="#b8b8b8"/><rect x="1" y="1" width="12" height="2" fill="#c4c4c4"/><path d="M1.5 5.7H12.5" stroke="#d0d0d0" stroke-width="1"/><path d="M1.5 8.4H12.5" stroke="#d0d0d0" stroke-width="1"/><path d="M1.5 11.100000000000001H12.5" stroke="#d0d0d0" stroke-width="1"/><path d="M4.5 3V12.5M8.5 3V12.5" stroke="#d0d0d0"/><circle cx="11.2" cy="11" r="3.3" fill="#c8c8c8" stroke="#8c8c8c" stroke-width="1.1"/><path d="M9.2 11H13.2" stroke="#fff" stroke-width="1.3"/></svg>
<svg style="left:442px;top:118px" width="20" height="18" viewBox="0 0 20 18"><g stroke="#9cbde6" fill="none"><path d="M6.5 2.7H10.5" stroke-width="1.5"/><path d="M9.3 2.7L4 9.6" stroke-width="2.2"/><path d="M10.3 2.7L11 9" stroke-width="2"/><path d="M1.6 10H6.5" stroke-width="1.4"/></g><g stroke="#4f7dd0" fill="none"><path d="M11 5.7H16.5" stroke-width="1.5"/><path d="M14.5 5.7L8.5 15" stroke-width="2.6"/><path d="M16 5.7L17 15" stroke-width="2.6"/><path d="M11.5 11.5H16.5" stroke-width="1.6"/><path d="M6 15.5H11M14 15.5H18.5" stroke-width="1.5"/></g></svg>
<svg style="left:474px;top:125px" width="8" height="6" viewBox="0 0 8 6"><path d="M.8 .5 L3 2.7 L.8 4.9 M4.1 .5 L6.3 2.7 L4.1 4.9" stroke="#404040" stroke-width="1.3" fill="none"/></svg>
<svg style="left:15px;top:647px" width="13" height="14" viewBox="0 0 13 14"><defs><linearGradient id="ng1" x1="0" x2="1" y1="0" y2="1"><stop offset="0" stop-color="#7fb0f0"/><stop offset="1" stop-color="#3d6fd0"/></linearGradient></defs><rect x="1.5" y="1.5" width="2.5" height="11" fill="url(#ng1)" stroke="#2a4c9c" stroke-width="1" stroke-linejoin="round"/><path d="M4.5 7 L10.5 1.5 V12.5Z" fill="url(#ng1)" stroke="#2a4c9c" stroke-width="1" stroke-linejoin="round"/></svg>
<svg style="left:39px;top:647px" width="11" height="14" viewBox="0 0 11 14"><defs><linearGradient id="ng2" x1="0" x2="1" y1="0" y2="1"><stop offset="0" stop-color="#7fb0f0"/><stop offset="1" stop-color="#3d6fd0"/></linearGradient></defs><path d="M1.8 7 L8.5 1.5 V12.5Z" fill="url(#ng2)" stroke="#2a4c9c" stroke-width="1" stroke-linejoin="round"/></svg>
<svg style="left:117px;top:647px" width="11" height="14" viewBox="0 0 11 14"><defs><linearGradient id="ng3" x1="0" x2="1" y1="0" y2="1"><stop offset="0" stop-color="#7fb0f0"/><stop offset="1" stop-color="#3d6fd0"/></linearGradient></defs><path d="M9 7 L2 1.5 V12.5Z" fill="url(#ng3)" stroke="#2a4c9c" stroke-width="1" stroke-linejoin="round"/></svg>
<svg style="left:140px;top:647px" width="13" height="14" viewBox="0 0 13 14"><defs><linearGradient id="ng4" x1="0" x2="1" y1="0" y2="1"><stop offset="0" stop-color="#7fb0f0"/><stop offset="1" stop-color="#3d6fd0"/></linearGradient></defs><rect x="9" y="1.5" width="2.5" height="11" fill="url(#ng4)" stroke="#2a4c9c" stroke-width="1" stroke-linejoin="round"/><path d="M8.5 7 L2.5 1.5 V12.5Z" fill="url(#ng4)" stroke="#2a4c9c" stroke-width="1" stroke-linejoin="round"/></svg>
<svg style="left:694px;top:128px" width="9" height="5" viewBox="0 0 9 5"><path d="M0.5 0.5 L4.5 4.5 L8.5 0.5" stroke="#404040" fill="none"/></svg>
<svg style="left:716px;top:122px" width="18" height="17" viewBox="0 0 18 17"><circle cx="8" cy="8" r="5.8" fill="#eeeeee" stroke="#b4b4b4" stroke-width="2.4" stroke-dasharray="2 1.6"/><circle cx="8" cy="8" r="2.6" fill="#dfeaf2" stroke="#9a9a9a"/><path d="M6.5 10.5 H10 V8 L15 12 L10 16 V13.5 H6.5Z" fill="#72c050" stroke="#2f7a1a" stroke-width="1"/></svg>
<svg style="left:787px;top:123px" width="14" height="16" viewBox="0 0 14 16"><path d="M.5 .5 H9 L13 4.5 V15.5 H.5Z" fill="#fbfbfb" stroke="#9a9a9a"/><path d="M3 5.5H10M3 7.5H10M3 9.5H10M3 11.5H10" stroke="#c8c8c8"/></svg>
<svg style="left:817px;top:124px" width="14" height="13" viewBox="0 0 14 13"><path d="M4 .5H13M6 3.5H13M6 6.5H13M6 9.5H13M0 12.5H13" stroke="#1a1a1a" stroke-width="1.2"/><path d="M.5 3.5 L3.5 5.5 L.5 7.5" stroke="#5c86c8" stroke-width="1.2" fill="none"/></svg>
<svg style="left:847px;top:122px" width="21" height="19" viewBox="0 0 21 19"><path d="M4.5 .5 H11 L13.5 3 V8 H4.5Z" fill="#fafafa" stroke="#555"/><path d="M6 3H10M6 5H11" stroke="#888"/><path d="M.5 5.5 V15.5 H15.5 V8.5 H.5" fill="#5b7fbd" stroke="#3a5591"/><rect x="2" y="9.5" width="12" height="5" fill="#8fb0e0"/><path d="M15 16H20L17.5 19Z" fill="#000"/></svg>
<svg style="left:878px;top:122px" width="17" height="17" viewBox="0 0 17 17"><path d="M.5 .5 H8 L11.5 4 V14.5 H.5Z" fill="#cfe0f6" stroke="#6c8cc4"/><rect x="7.0" y="7.0" width="9" height="8.5" fill="#6d84b8" stroke="#3c4f86"/><rect x="8.5" y="8.0" width="6" height="3.04" fill="#eef2fa"/><rect x="9.0" y="12.5" width="5" height="2" fill="#e0e8d0"/></svg>
<svg style="left:909px;top:123px" width="17" height="15" viewBox="0 0 17 15"><rect x=".5" y=".5" width="14" height="12.5" fill="#fafafa" stroke="#7a8aa8"/><rect x="1" y="1" width="13" height="2.5" fill="#8db0e0"/><path d="M7.5 8.7 H12.0 V6.5 L16.5 10.5 L12.0 14.5 V12.3 H7.5Z" fill="#7cc55a" stroke="#3b7a1f" stroke-width="1"/></svg>
<svg style="left:940px;top:123px" width="17" height="15" viewBox="0 0 17 15"><rect x=".5" y=".5" width="14" height="12.5" fill="#fafafa" stroke="#7a8aa8"/><rect x="1" y="1" width="13" height="2.5" fill="#8db0e0"/><rect x="2.5" y="9" width="7" height="5" rx="2.4" fill="#ddd" stroke="#555" stroke-width="1.5"/><rect x="8" y="9" width="7" height="5" rx="2.4" fill="#ddd" stroke="#555" stroke-width="1.5"/></svg>
<svg style="left:971px;top:126px" width="18" height="13" viewBox="0 0 18 13"><path d="M.5 9.5 V.5 H15" stroke="#cfcfcf" fill="none"/><circle cx="12.5" cy="8.2" r="3.4" fill="#f08a3c" stroke="#b85410" stroke-width="1.1"/><path d="M10.5 8.2H14.5" stroke="#fff" stroke-width="1.3"/></svg>
<svg style="left:1002px;top:122px" width="17" height="17" viewBox="0 0 17 17"><path d="M4.5 0.5H10 L11.5 2 V6 H4.5Z" fill="#cfe2f8" stroke="#6f7f96"/><rect x="0.5" y="5.5" width="15" height="7" rx="2" fill="#e8e8e8" stroke="#6c6c6c"/><rect x="3" y="8" width="10" height="2.5" fill="#b8b8b8"/><rect x="3.5" y="11.5" width="9" height="4" fill="#f4f4f4" stroke="#6f7f96"/></svg>
<svg style="left:1000px;top:89px" width="9" height="9" viewBox="0 0 9 9"><rect x=".5" y="3.5" width="5" height="5" fill="none" stroke="#000"/><path d="M2.5 3.5V.5H8.5V6.5H5.5" fill="none" stroke="#000"/><path d="M2.5 1.5H8.5" stroke="#000"/></svg>
<svg style="left:1021px;top:89px" width="9" height="9" viewBox="0 0 9 9"><path d="M1 1L8 8M8 1L1 8" stroke="#000" stroke-width="1.6"/></svg>
<svg style="left:1000px;top:300px" width="9" height="9" viewBox="0 0 9 9"><rect x=".5" y="3.5" width="5" height="5" fill="none" stroke="#000"/><path d="M2.5 3.5V.5H8.5V6.5H5.5" fill="none" stroke="#000"/><path d="M2.5 1.5H8.5" stroke="#000"/></svg>
<svg style="left:1021px;top:300px" width="9" height="9" viewBox="0 0 9 9"><path d="M1 1L8 8M8 1L1 8" stroke="#000" stroke-width="1.6"/></svg>
<svg style="left:699px;top:338px" width="9" height="5" viewBox="0 0 9 5"></svg>
<svg style="left:802px;top:341px" width="9" height="5" viewBox="0 0 9 5"><path d="M0.5 0.5 L4.5 4.5 L8.5 0.5" stroke="#404040" fill="none"/></svg>
<svg style="left:1000px;top:336px" width="16" height="16" viewBox="0 0 16 16"><path d="M3 2.5 Q6.5 1 10 2.5 V12.5 Q6.5 14 3 12.5Z" fill="#f4f4f4" stroke="#b8b8b8"/><path d="M4.5 5.5H9M4.5 7.5H9" stroke="#a8a8a8"/><path d="M7 9.5 H10.5 V7.5 L14.5 11 L10.5 14.5 V12.5 H7Z" fill="#dedede" stroke="#8a8a8a"/></svg>
<svg style="left:619px;top:392px" width="16" height="16" viewBox="0 0 16 16"><path d="M1 8.5 A6.8 6.8 0 0 1 12.6 3.7 L14.7 1.8 V8.3 H9 L10.4 6 A3.5 3.5 0 0 0 4.4 8.5Z" fill="#e8e8e8" stroke="#a8a8a8" stroke-width="1.1" stroke-linejoin="miter"/><path d="M1 8.5 A6.8 6.8 0 0 1 12.6 3.7 L14.7 1.8 V8.3 H9 L10.4 6 A3.5 3.5 0 0 0 4.4 8.5Z" transform="rotate(180 7.85 9.15)" fill="#e8e8e8" stroke="#a8a8a8" stroke-width="1.1"/></svg>
<svg style="left:650px;top:392px" width="16" height="16" viewBox="0 0 16 16"><path d="M0.5 3 Q0.5 0.5 5.0 0.5 Q9.5 0.5 9.5 3 V10 Q9.5 12.5 5.0 12.5 Q0.5 12.5 0.5 10Z" fill="#e4e4e4" stroke="#b4b4b4"/><path d="M2 5.5 Q5.0 7 8 5.5 M2 8.5 Q5.0 10 8 8.5" fill="none" stroke="#d4d4d4"/><circle cx="11" cy="11" r="3.6" fill="#e8e8e8" stroke="#a8a8a8"/></svg>
<svg style="left:616px;top:622px" width="6" height="8" viewBox="0 0 6 8"><path d="M4.5 .5 L1.5 3.5 L4.5 6.5" stroke="#606060" stroke-width="1.6" fill="none"/></svg>
<svg style="left:1001px;top:622px" width="6" height="8" viewBox="0 0 6 8"><path d="M1.5 .5 L4.5 3.5 L1.5 6.5" stroke="#606060" stroke-width="1.6" fill="none"/></svg>
</body></html>
